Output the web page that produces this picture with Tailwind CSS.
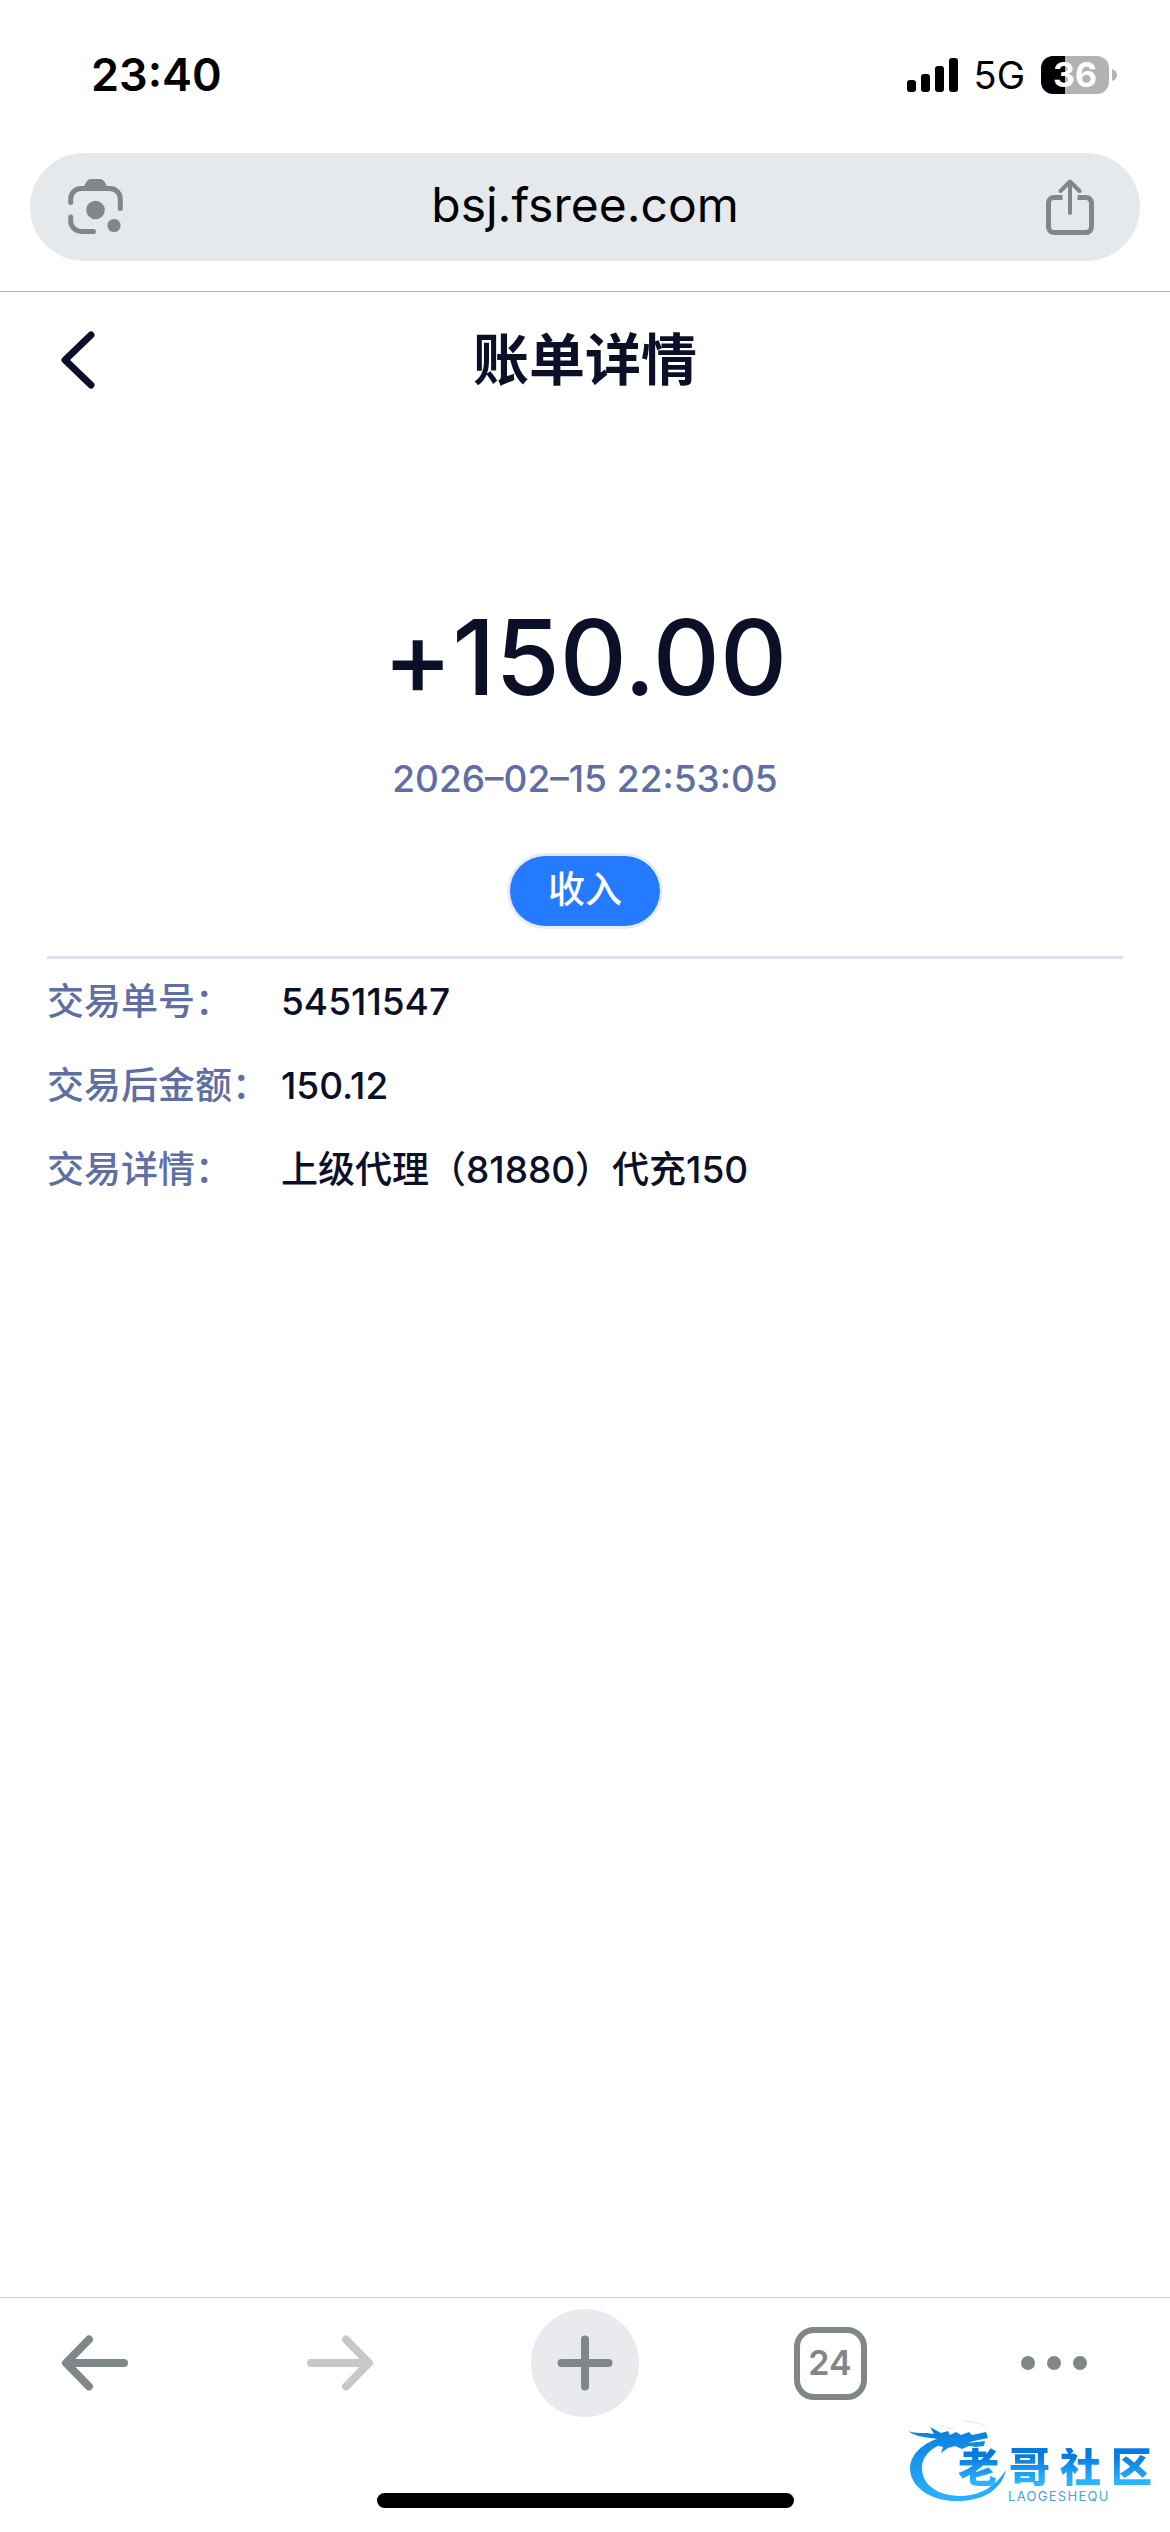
<!DOCTYPE html>
<html lang="zh-CN">

<head>
  <meta charset="UTF-8">
  <meta name="viewport" content="width=device-width, initial-scale=1.0">
  <title>账单详情</title>
  <script src="https://cdn.jsdelivr.net/npm/@tailwindcss/browser@4"></script>
</head>

<body class="bg-white font-['Inter','Noto_Sans_CJK_SC',sans-serif] text-[#0b0f27]">
  <div class="relative flex min-h-screen flex-col">

    <!-- Status bar -->
    <div class="flex h-[153px] items-center justify-between pb-1 pl-[91px] pr-[53px] text-black">
      <span class="text-[45px] font-semibold leading-none">23:40</span>
      <div class="flex items-center">
        <svg class="h-[34px] w-[52px]" viewBox="0 0 52 34" fill="currentColor" aria-label="Signal">
          <rect x="0" y="22" width="9" height="12" rx="3" />
          <rect x="14" y="16" width="9" height="18" rx="3" />
          <rect x="28" y="8" width="9" height="26" rx="3" />
          <rect x="42" y="0" width="9" height="34" rx="3" />
        </svg>
        <span class="ml-[15px] text-[38px] leading-none">5G</span>
        <div class="ml-4 flex h-[38px] w-[68px] items-center justify-center rounded-xl bg-linear-to-r from-black from-35% to-[#b2b2b2] to-35%">
          <span class="text-[34px] font-bold leading-none text-white">36</span>
        </div>
        <svg class="ml-[3px] h-3 w-[5px]" viewBox="0 0 5 12" fill="#b2b2b2">
          <path d="M0 0C3 1 5 3 5 6S3 11 0 12Z" />
        </svg>
      </div>
    </div>

    <!-- Address bar -->
    <div class="border-b border-[#b0b1b3] px-[30px] pb-[30px]">
      <div class="flex h-[108px] items-center justify-between rounded-full bg-[#e6e9ec] px-[38px] text-[#80878a]">
        <button type="button" aria-label="Lens">
          <svg class="size-14" viewBox="0 0 56 56" fill="none" stroke="currentColor" stroke-width="5" stroke-linecap="round">
            <path d="M2.700 23.500V20.500A10.500 10.500 0 0 1 13 9.500H42A10.500 10.500 0 0 1 52.300 20.500V29.500" />
            <path d="M2.700 38V42A10.500 10.500 0 0 0 13 52.500H25.500" />
            <path d="M15.500 8L19 2Q20.500 0 23 0H32Q34.500 0 36 2L39.500 8Z" fill="currentColor" stroke="none" />
            <circle cx="27.500" cy="31" r="9.300" fill="currentColor" stroke="none" />
            <circle cx="46" cy="46.500" r="6.600" fill="currentColor" stroke="none" />
          </svg>
        </button>
        <a href="#" class="pb-1 text-[48px] leading-none text-black">bsj.fsree.com</a>
        <button type="button" aria-label="Share" class="mr-2">
          <svg class="h-14 w-12" viewBox="0 0 48 56" fill="none" stroke="currentColor" stroke-width="4.500" stroke-linecap="round">
            <path d="M16.500 18.500H8A5.500 5.500 0 0 0 2.500 24V48A5.500 5.500 0 0 0 8 53.500H40A5.500 5.500 0 0 0 45.500 48V24A5.500 5.500 0 0 0 40 18.500H31.500" stroke-linecap="butt" stroke-width="5" />
            <path d="M24 3V34M14.500 12L24 2.500L33.500 12" stroke-linejoin="round" stroke-width="4" />
          </svg>
        </button>
      </div>
    </div>

    <!-- Page header -->
    <header class="grid h-[136px] grid-cols-3 items-center px-[60px]">
      <button type="button" aria-label="返回" class="justify-self-start">
        <svg class="h-[58px] w-9" viewBox="0 0 36 58" fill="none" stroke="currentColor" stroke-width="7" stroke-linecap="round" stroke-linejoin="round">
          <path d="M31 4L5 29L31 54" />
        </svg>
      </button>
      <h1 class="text-center text-[56px] font-semibold leading-none whitespace-nowrap">账单详情</h1>
    </header>

    <main class="grow px-[47px]">
      <section class="flex flex-col items-center border-b-3 border-[#dce3f0] pb-[30px] pt-[177px]">
        <p class="text-[104px] font-medium leading-[105px] [font-feature-settings:'calt'_0]">+150.00</p>
        <p class="mt-[45px] text-[37px] font-medium leading-[48px] text-[#5f6fa3]">2026–02–15 22:53:05</p>
        <span class="mt-[53px] flex h-[70px] items-center rounded-full bg-[#247bff] px-[38px] pb-1 text-[37px] font-medium leading-none text-white shadow-[0_0_0_3px_#e8ecf2]">收入</span>
      </section>

      <dl class="grid grid-cols-[234px_1fr] pt-px text-[37px] font-medium leading-[84px]">
        <dt class="text-[#5f6fa3]">交易单号：</dt>
        <dd>54511547</dd>
        <dt class="text-[#5f6fa3]">交易后金额：</dt>
        <dd>150.12</dd>
        <dt class="text-[#5f6fa3]">交易详情：</dt>
        <dd>上级代理（81880）代充150</dd>
      </dl>
    </main>

    <!-- Browser toolbar -->
    <footer class="border-t border-[#cbcccd] pt-[11px]">
      <nav class="flex items-center justify-between px-[41px] text-[#80878a]">
        <button type="button" aria-label="Back" class="flex size-[108px] items-center justify-center">
          <svg class="h-14 w-[68px]" viewBox="0 0 68 56" fill="none" stroke="currentColor" stroke-width="8" stroke-linecap="round" stroke-linejoin="round">
            <path d="M63 28H6M28 4.500L5 28L28 51.500" />
          </svg>
        </button>
        <button type="button" aria-label="Forward" class="flex size-[108px] items-center justify-center text-[#c8c8c8]">
          <svg class="h-14 w-[68px]" viewBox="0 0 68 56" fill="none" stroke="currentColor" stroke-width="8" stroke-linecap="round" stroke-linejoin="round">
            <path d="M5 28H62M40 4.500L63 28L40 51.500" />
          </svg>
        </button>
        <button type="button" aria-label="New tab" class="flex size-[108px] items-center justify-center rounded-full bg-[#e8eaed]">
          <svg class="size-14" viewBox="0 0 56 56" fill="none" stroke="currentColor" stroke-width="8" stroke-linecap="round">
            <path d="M28 4.500V51.500M4.500 28H51.500" />
          </svg>
        </button>
        <button type="button" aria-label="Tabs" class="flex size-[108px] items-center justify-center">
          <span class="flex size-[73px] items-center justify-center rounded-[20px] border-6 border-current text-[34px] font-semibold leading-none">24</span>
        </button>
        <button type="button" aria-label="More" class="flex size-[108px] items-center gap-3">
          <span class="size-[14px] rounded-full bg-current"></span>
          <span class="size-[14px] rounded-full bg-current"></span>
          <span class="size-[14px] rounded-full bg-current"></span>
        </button>
      </nav>
      <div class="mx-auto mb-6 mt-[76px] h-[15px] w-[417px] rounded-full bg-black"></div>
    </footer>

    <!-- Watermark -->
    <div class="absolute bottom-[26px] right-[18px] h-[86px] w-[244px]">
      <svg class="absolute inset-0 h-full w-full" viewBox="0 0 244 86">
        <defs>
          <linearGradient id="dragon" x1="0" y1="10" x2="0" y2="82" gradientUnits="userSpaceOnUse">
            <stop offset="0" stop-color="#0a7fe0" />
            <stop offset="1" stop-color="#2bb4ff" />
          </linearGradient>
        </defs>
        <g fill="url(#dragon)">
          <path d="M36 17C14 22 2 35 2 49C3 69 25 82 52 81C76 80 93 70 98 50C86 68 72 75 54 76C31 76 14 66 14 48C14 35 25 26 39 23Z" />
          <path d="M0 11C8 14 17 12 26 14L22 7L33 13L40 11L42 15L48 12L53 15L61 12L64 15L78 12L80 18L66 21L60 23L77 21L76 26L68 27L61 26L54 29L47 26L40 28L33 33L35 27L27 25L34 20C22 17 9 18 0 11Z" />
        </g>
        <path d="M31 5Q36 8 46 9M54 1Q78 2 80 10" fill="none" stroke="#dcebf8" />
      </svg>
      <div class="absolute right-0 top-[28px] flex gap-[10px] bg-linear-to-b from-[#0879df] from-20% to-[#2bb4ff] to-90% bg-clip-text text-[41px] font-black leading-[38px] text-transparent">
        <span>老</span><span>哥</span><span>社</span><span>区</span>
      </div>
      <span class="absolute left-[100px] top-[70px] text-[13px] leading-none tracking-widest text-[#4a9fe0]">LAOGESHEQU</span>
    </div>
  </div>
</body>

</html>
